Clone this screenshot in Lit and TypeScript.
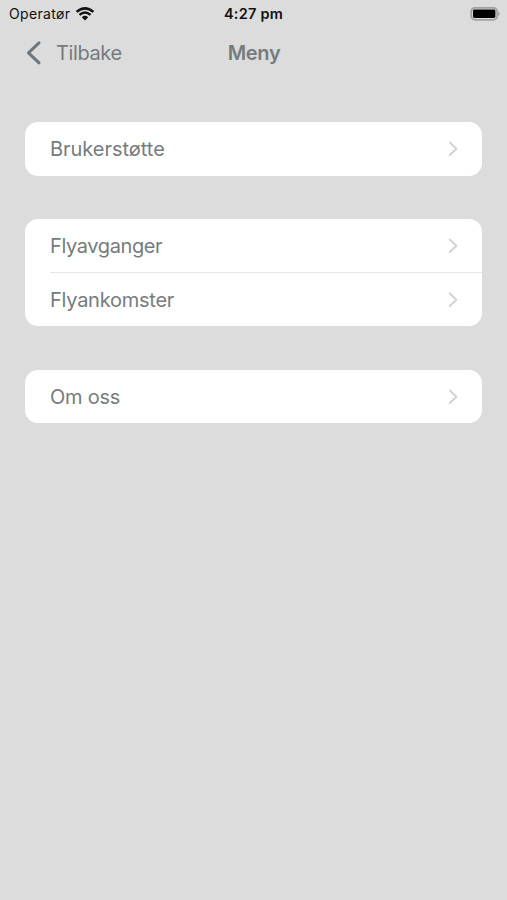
import { LitElement, html, css } from "lit";
import { customElement } from "lit/decorators.js";
import { styleMap } from "lit/directives/style-map.js";

interface Item {
  label: string;
  tracking: number;
}

const groups: Item[][] = [
  [{ label: "Brukerstøtte", tracking: -0.03 }],
  [
    { label: "Flyavganger", tracking: -0.38 },
    { label: "Flyankomster", tracking: -0.25 },
  ],
  [{ label: "Om oss", tracking: -0.25 }],
];

@customElement("app-root")
export class AppRoot extends LitElement {
  static styles = css`
    :host { display: block; height: 900px; background: #dcdcdc; font-family: Inter, "Liberation Sans", sans-serif; color: #767b7e; overflow: hidden; }
    * { box-sizing: border-box; }
    svg { display: block; fill: none; flex: none; }
    .status { height: 27px; display: grid; grid-template-columns: 1fr auto 1fr; align-items: center; padding: 0 7px 0 9px; color: #111; font-size: 14px; }
    .carrier { display: flex; align-items: center; gap: 5px; letter-spacing: 0.32px; }
    .time { font-weight: 600; font-size: 14.5px; letter-spacing: 0.25px; margin-left: -2px; }
    .battery { justify-self: end; }
    .nav { height: 51px; display: grid; grid-template-columns: 1fr auto 1fr; align-items: center; padding: 0 26px; font-size: 20px; }
    .back { display: flex; align-items: center; gap: 14px; letter-spacing: -0.4px; }
    .title { font-weight: 600; letter-spacing: -0.3px; padding-left: 1px; }
    .menu { display: flex; flex-direction: column; gap: 43.5px; padding: 44px 25px 0; }
    .group { background: #fff; border-radius: 13px; padding-left: 25px; }
    .row { height: 53.5px; display: flex; align-items: center; justify-content: space-between; padding: 1px 24px 0 0; font-size: 20px; }
    .row + .row { box-shadow: 0 -1px 0 #e6e6e6; }
  `;

  private row(item: Item) {
    return html`<div class="row">
      <span style=${styleMap({ letterSpacing: `${item.tracking}px` })}>${item.label}</span>
      <svg width="10" height="16" viewBox="0 0 10 16"><path d="M1.8 1.6 8.4 7.8 1.8 14" stroke="#d3d3d3" stroke-width="2.1" stroke-linecap="round" stroke-linejoin="round"/></svg>
    </div>`;
  }

  render() {
    return html`
      <div class="status">
        <div class="carrier"><span>Operatør</span>
          <svg width="20" height="14" viewBox="0 0 20 14"><path d="M1.6 4.9Q10-2.2 18.4 4.9M4.5 7.9Q10 3.2 15.5 7.9" stroke="#111" stroke-width="2.5"/><path d="M6.8 10.2Q10 7.4 13.2 10.2L10 13.4Z" fill="#111"/></svg>
        </div>
        <span class="time">4:27 pm</span>
        <svg class="battery" width="30" height="14" viewBox="0 0 30 14"><rect x="1.2" y=".8" width="26" height="12" rx="3.8" stroke="#a2a2a2" stroke-width="1.8"/><rect x="3" y="2.6" width="22.4" height="8.4" rx="1.4" fill="#000"/><path d="M28.2 4.4Q31.4 6.8 28.2 9.2Z" fill="#a2a2a2"/></svg>
      </div>
      <div class="nav">
        <div class="back"><svg width="16" height="24" viewBox="0 0 16 24"><path d="M13 1.8 2.5 11.8 13 21.8" stroke="#70777c" stroke-width="3" stroke-linecap="round" stroke-linejoin="round"/></svg><span>Tilbake</span></div>
        <span class="title">Meny</span>
      </div>
      <div class="menu">${groups.map((g) => html`<div class="group">${g.map((item) => this.row(item))}</div>`)}</div>`;
  }
}
